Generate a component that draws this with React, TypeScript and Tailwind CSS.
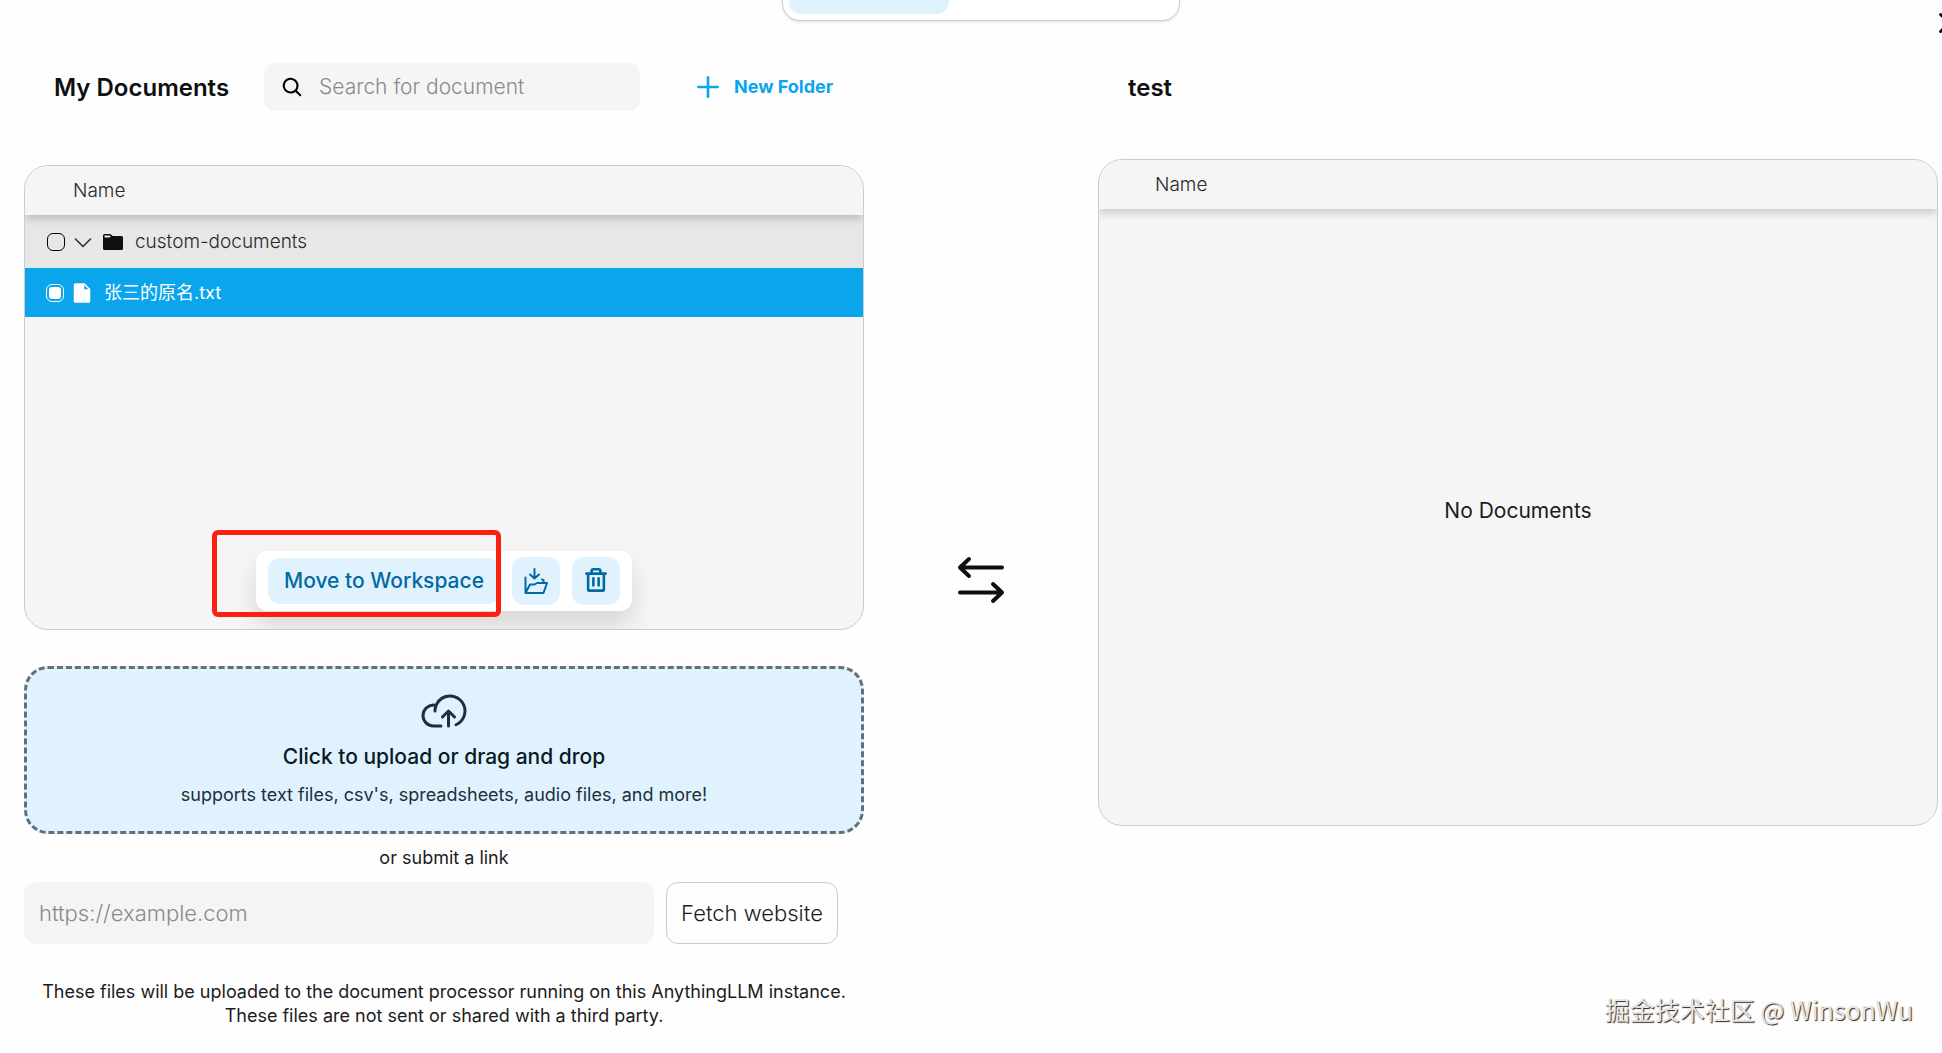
import React from "react";
import {
  PiCaretDown,
  PiCloudArrowUp,
  PiFileFill,
  PiMagnifyingGlassBold,
  PiPlusBold,
  PiTrashBold,
  PiXBold,
} from "react-icons/pi";

function SwapArrows() {
  return (
    <svg
      viewBox="0 0 48 48"
      className="size-12"
      fill="none"
      stroke="#0e0f0f"
      strokeWidth="4"
      strokeLinecap="round"
      strokeLinejoin="round"
      aria-hidden="true"
    >
      <path d="M45 11.5H3M12 3 3 11.5 12 20" />
      <path d="M3 36.500h42M36 28l9 8.500-9 8.500" />
    </svg>
  );
}

function FolderIcon() {
  return (
    <svg viewBox="0 0 20 16" className="ml-2 h-4 w-5" fill="#0e0f0f" aria-hidden="true">
      <path d="M1.500 0H6.700Q7.400 0 8 .5L9.700 2H18.500Q20 2 20 3.500V14.500Q20 16 18.500 16H1.500Q0 16 0 14.500V1.500Q0 0 1.500 0z" />
      <path d="M1.500 1.500H6.500L7.800 2.500 6.300 3.600H1.500z" fill="#e7e7e7" />
    </svg>
  );
}

function MoveToFolderIcon() {
  return (
    <svg
      viewBox="0 0 24 26"
      className="h-[26px] w-6"
      fill="none"
      stroke="currentColor"
      strokeWidth="2"
      strokeLinecap="round"
      strokeLinejoin="round"
      aria-hidden="true"
    >
      <path d="M10.500 1v9M6 6.500l4.500 4 4.500-4" />
      <path d="M1.500 9.500V25M1.500 25l4.500-8.500h4.500l2.500-1.500H23L19.500 25z" />
      <path d="M18 11.500l1.500.5v3" />
    </svg>
  );
}

function TopTabs() {
  return (
    <div className="flex h-[21px] items-end justify-center">
      <nav
        aria-label="Sections"
        className="flex h-12 w-[398px] rounded-[18px] border border-[#cfcfcf] bg-white p-1.5 shadow-sm"
      >
        <button type="button" aria-label="Documents" className="w-40 rounded-xl bg-[#e0f2fe]" />
        <button type="button" aria-label="Data Connectors" className="flex-1 rounded-xl" />
      </nav>
    </div>
  );
}

function HeaderRow({ inset }: { inset: string }) {
  return (
    <thead className="relative z-10 bg-[#f5f5f5] shadow-[0_4px_8px_rgba(0,0,0,0.18)]">
      <tr className="h-[49px]">
        <th scope="col" className={`${inset} text-left text-[19px] leading-7 font-light text-[#2a2a2a]`}>
          Name
        </th>
      </tr>
    </thead>
  );
}

function SelectionBar() {
  const square =
    "flex size-12 items-center justify-center rounded-xl bg-[#e0f2fe] text-[#026aa2]";
  return (
    <div className="absolute inset-x-0 bottom-[18px] flex justify-center">
      <div className="relative flex items-center gap-3 rounded-xl bg-white px-3 py-1.5 shadow-[0_15px_25px_rgba(0,0,0,0.12)]">
        <button
          type="button"
          className="h-[46px] w-58 rounded-xl bg-[#e0f2fe] text-[21px] font-medium whitespace-nowrap text-[#026aa2]"
        >
          Move to Workspace
        </button>
        <button type="button" aria-label="Move to folder" className={square}>
          <MoveToFolderIcon />
        </button>
        <button type="button" aria-label="Delete" className={square}>
          <PiTrashBold className="size-7" />
        </button>
        <div className="pointer-events-none absolute -top-[21px] -left-11 h-[87px] w-[289px] rounded-md border-[5px] border-[#fb2012]" />
      </div>
    </div>
  );
}

function MyDocuments() {
  return (
    <section className="flex flex-col">
      <div className="flex h-12 items-center pl-[30px]">
        <h2 className="w-[210px] pt-0.5 text-2xl font-semibold whitespace-nowrap text-[#0e0f0f]">
          My Documents
        </h2>
        <label className="flex h-12 w-94 items-center gap-4 rounded-xl bg-[#f5f5f5] px-[17px]">
          <PiMagnifyingGlassBold className="size-[22px] shrink-0 text-black" />
          <input
            type="search"
            aria-label="Search for document"
            placeholder="Search for document"
            className="w-full min-w-0 bg-transparent text-[21px] font-light outline-none placeholder:text-[#8a8a8a]"
          />
        </label>
        <button
          type="button"
          className="ml-[54px] flex items-center gap-3 text-lg font-bold whitespace-nowrap text-[#0ba5ec]"
        >
          <PiPlusBold className="size-7" />
          New Folder
        </button>
      </div>

      <div className="relative mt-[54px] h-[465px] overflow-hidden rounded-3xl border border-[#cccccc] bg-[#f5f5f5]">
        <table className="w-full border-collapse">
          <HeaderRow inset="pl-12" />
          <tbody>
            <tr className="h-[53px] bg-[#e7e7e7] text-[19px] leading-7 font-light text-[#2a2a2a]">
              <td className="pl-[22px]">
                <div className="flex items-center">
                  <input
                    type="checkbox"
                    aria-label="Select custom-documents"
                    className="size-[18px] appearance-none rounded-md border border-black"
                  />
                  <PiCaretDown className="ml-1.5 size-6" />
                  <FolderIcon />
                  <span className="ml-3">custom-documents</span>
                </div>
              </td>
            </tr>
            <tr className="h-[49px] bg-[#0ba5ec] text-lg text-white">
              <td className="pl-[21px]">
                <div className="flex items-center">
                  <input
                    type="checkbox"
                    defaultChecked
                    aria-label="Select 张三的原名.txt"
                    className="size-[18px] appearance-none rounded-md border border-white bg-white bg-clip-content p-0.5"
                  />
                  <PiFileFill className="ml-1.5 size-6" />
                  <span className="ml-2.5">张三的原名.txt</span>
                </div>
              </td>
            </tr>
          </tbody>
        </table>
        <SelectionBar />
      </div>

      <button
        type="button"
        className="mt-9 flex h-[168px] flex-col items-center rounded-3xl border-3 border-dashed border-[#62707a] bg-[#e0f2fe] pt-[18px]"
      >
        <PiCloudArrowUp className="size-12 text-[#20303a]" />
        <span className="mt-1.5 text-[21px] leading-8 font-medium text-[#0a1a24]">
          Click to upload or drag and drop
        </span>
        <span className="mt-1.5 text-lg leading-8 text-[#20303a]">
          supports text files, csv's, spreadsheets, audio files, and more!
        </span>
      </button>

      <p className="mt-3 text-center text-lg leading-6 text-[#1c1c1c]">or submit a link</p>

      <form className="mt-3 mr-[26px] flex gap-3" onSubmit={(e) => e.preventDefault()}>
        <input
          type="url"
          aria-label="Link"
          placeholder="https://example.com"
          className="h-[62px] min-w-0 flex-1 rounded-xl bg-[#f4f4f4] px-[15px] text-[22px] font-light outline-none placeholder:text-[#8a8a8a]"
        />
        <button
          type="submit"
          className="h-[62px] w-43 rounded-xl border border-[#cccccc] text-[22px] font-light whitespace-nowrap text-[#1c1c1c]"
        >
          Fetch website
        </button>
      </form>

      <p className="mt-9 text-center text-lg leading-6 text-[#1c1c1c]">
        These files will be uploaded to the document processor running on this AnythingLLM instance.
        <br />
        These files are not sent or shared with a third party.
      </p>
    </section>
  );
}

function Workspace() {
  return (
    <section className="flex flex-col">
      <h2 className="flex h-12 items-center pt-0.5 pl-[30px] text-2xl font-semibold text-[#0e0f0f]">
        test
      </h2>
      <div className="mt-12 flex h-[667px] flex-col overflow-hidden rounded-3xl border border-[#cccccc] bg-[#f5f5f5]">
        <table className="w-full border-collapse">
          <HeaderRow inset="pl-14" />
        </table>
        <p className="flex flex-1 items-center justify-center pb-3 text-[21px] text-[#1c1c1c]">
          No Documents
        </p>
      </div>
    </section>
  );
}

export default function App() {
  return (
    <div className="relative min-h-screen overflow-hidden bg-[#fefefe] pr-1 pl-6 font-['Inter','Noto_Sans_CJK_SC',sans-serif]">
      <TopTabs />
      <button type="button" aria-label="Close" className="absolute top-2 -right-[22px] text-black">
        <PiXBold className="size-[30px]" />
      </button>
      <main className="mt-[42px] grid grid-cols-[minmax(0,1fr)_234px_minmax(0,1fr)]">
        <MyDocuments />
        <div className="flex justify-center pt-[493px]">
          <button type="button" aria-label="Swap" className="size-12">
            <SwapArrows />
          </button>
        </div>
        <Workspace />
      </main>
      <div className="absolute right-[29px] bottom-[26px] font-['Noto_Sans_CJK_SC',sans-serif] text-[25px] leading-9 text-[#e6e6e6] [text-shadow:1px_1px_1px_#222]">
        掘金技术社区 @ WinsonWu
      </div>
    </div>
  );
}
